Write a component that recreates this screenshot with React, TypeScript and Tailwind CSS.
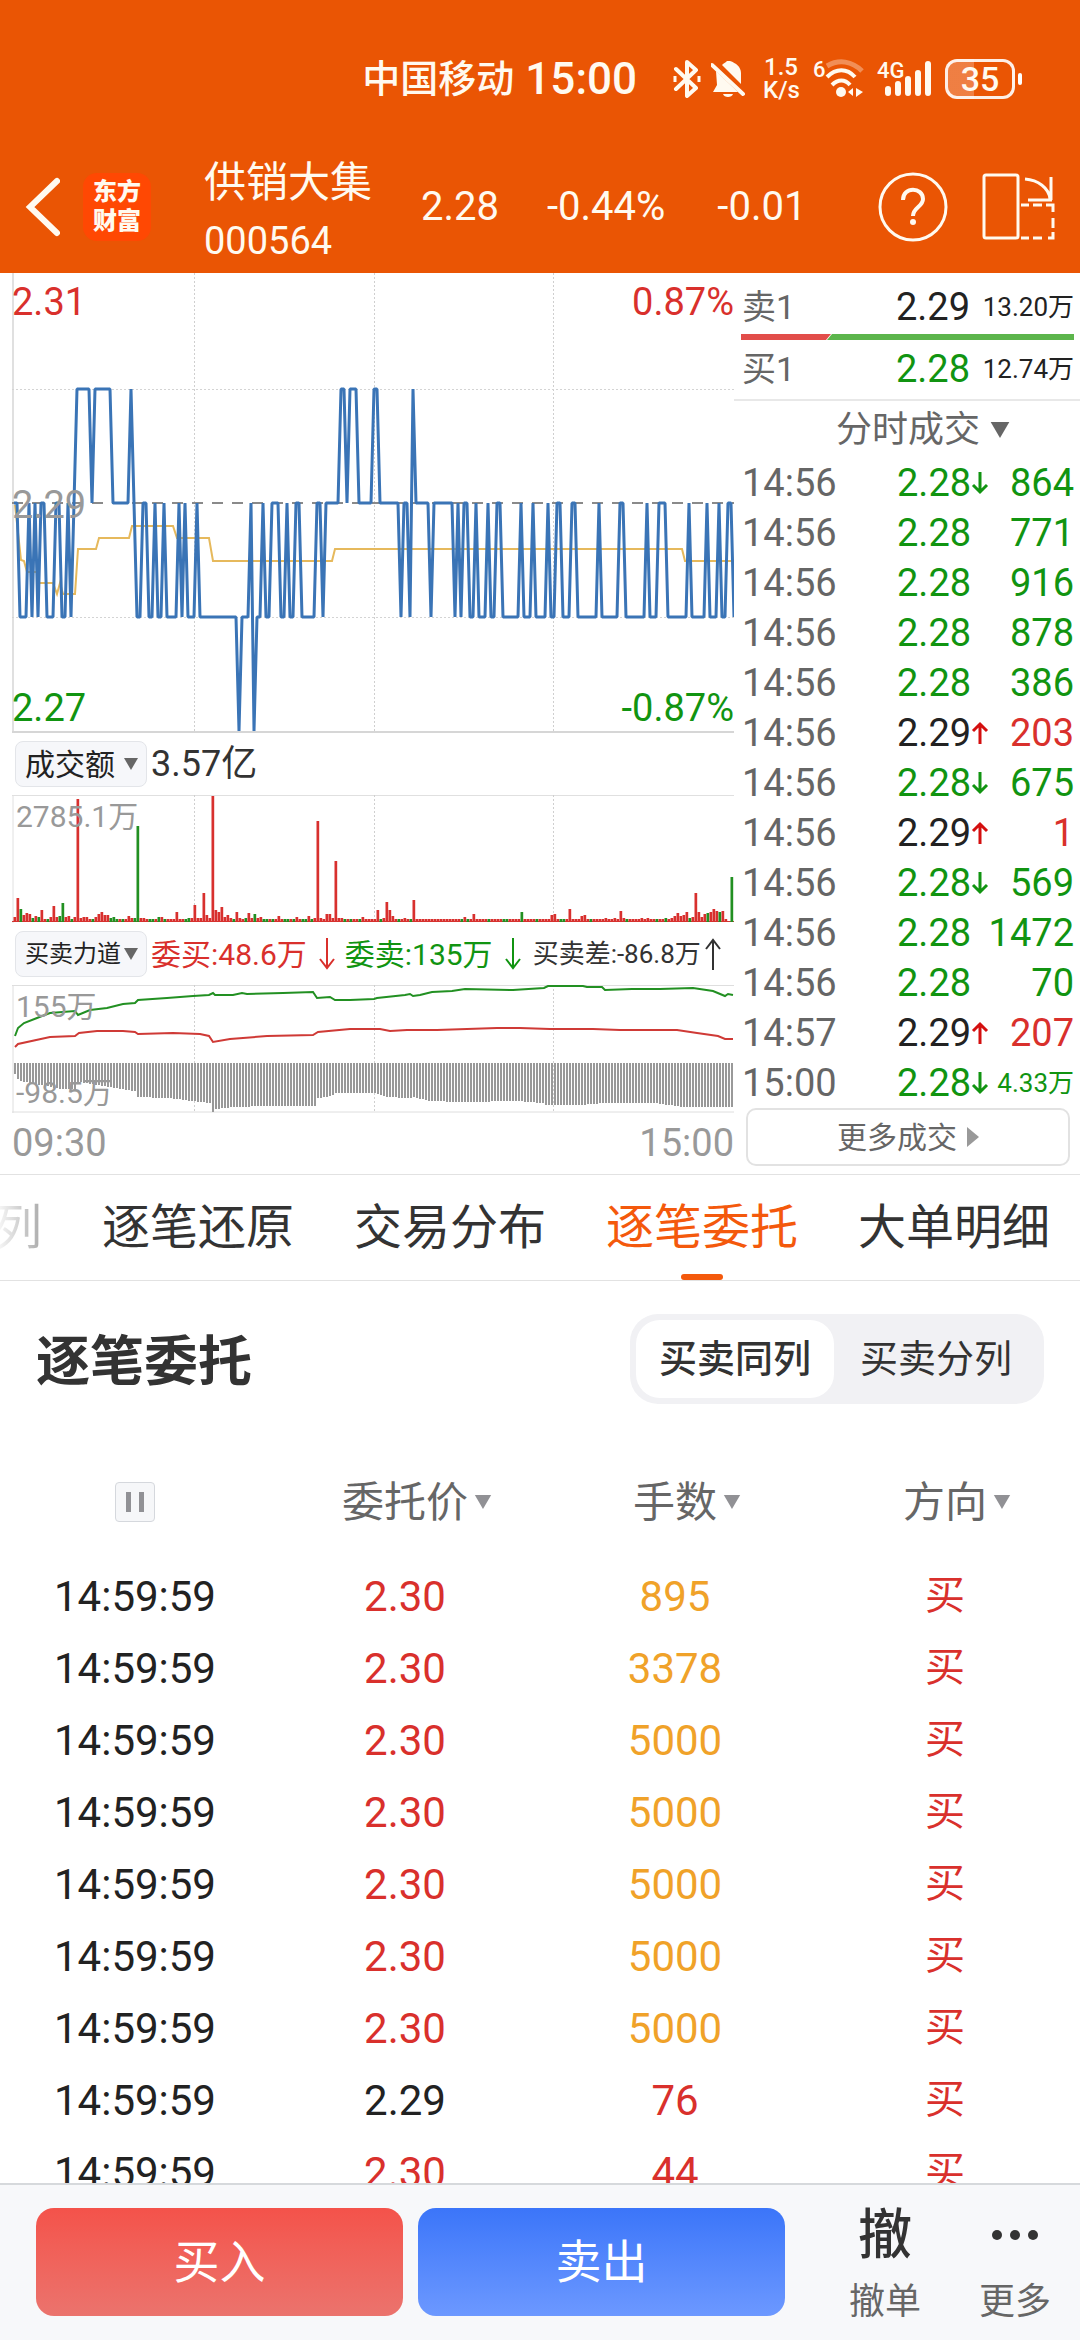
/**
 * Intraday quote screen: status bar, stock header, minute charts with the
 * trade tape beside them, order-by-order list and the trading bar.
 */
import { useState } from "react";
import type { ReactNode } from "react";

/* ---------- data ---------- */

// Price per minute as level + run length: A 2.30, B 2.29, C 2.28, D 2.27
const PRICE_RUNS =
  "B2 C3 B1 C1 B1 C1 B2 C3 B2 C2 B1 C1 B1 A5 B1 A6 B6 A1 B1 C2 B2 C2 B1 C2 B1 C4 B1 C1 B1 C3 B1 C13 D1 C3 B1 D1 " +
  "C2 B1 C2 B3 C2 B1 C2 B2 C5 B2 C1 B5 A2 B1 A3 B5 A2 B7 C1 B2 C1 A1 B5 C1 B7 C1 B1 C1 B2 C2 B1 C3 B1 C2 B2 C6 " +
  "B1 C3 B1 C4 B1 C2 B2 C3 B2 C7 B1 C6 B2 C7 B1 C3 B3 C7 B1 C5 B1 C3 B1 C2 B2 C1";

const LEVEL_Y: Record<string, number> = { A: 116, B: 230, C: 344, D: 458 };

const AVG_POINTS =
  "3,232 9,287 12,288 15,299 25,299 27,310 41,310 45,321 48,310 51,321 63,321 66,276 84,276 87,265 117,265 120,253 " +
  "161,253 165,265 197,265 201,288 320,288 323,276 670,276 673,288 721,288";

// minute -> bar height; every other minute has the base height
const VOLUME: Record<number, number> = {
  0: 5, 1: 24, 2: 13, 3: 7, 4: 9, 5: 8, 6: 4, 7: 6, 8: 5, 9: 12, 12: 5, 13: 16, 14: 5, 15: 6, 16: 19, 17: 5, 18: 6,
  20: 5, 21: 123, 22: 4, 23: 5, 24: 5, 27: 5, 28: 8, 29: 10, 30: 7, 31: 7, 32: 4, 33: 5, 38: 6, 39: 4, 40: 4, 41: 96,
  42: 4, 43: 4, 48: 5, 49: 5, 54: 10, 58: 4, 59: 4, 60: 17, 61: 4, 62: 4, 63: 29, 64: 7, 65: 4, 66: 126, 67: 12,
  68: 10, 69: 15, 70: 5, 71: 7, 72: 4, 74: 10, 75: 4, 77: 4, 78: 9, 79: 4, 80: 8, 81: 4, 82: 5, 88: 6, 94: 5, 98: 6,
  100: 4, 101: 101, 102: 4, 104: 8, 105: 8, 106: 4, 107: 61, 108: 4, 109: 4, 116: 5, 121: 12, 123: 4, 124: 20,
  125: 12, 126: 6, 130: 4, 133: 22, 150: 5, 153: 8, 169: 10, 179: 7, 180: 8, 185: 13, 189: 6, 190: 7, 197: 4, 200: 4,
  202: 11, 203: 4, 209: 4, 211: 4, 217: 4, 219: 4, 220: 6, 221: 9, 222: 6, 223: 7, 224: 10, 225: 4, 226: 5, 227: 29,
  228: 10, 229: 5, 230: 8, 231: 9, 232: 10, 233: 13, 234: 11, 235: 10, 236: 11, 238: 0, 239: 45,
};

const VOLUME_DOWN = new Set([
  2, 6, 8, 11, 15, 16, 19, 26, 32, 33, 34, 36, 40, 41, 45, 46, 48, 50, 57, 58, 73, 77, 80, 83, 84, 86, 90, 91, 93, 96,
  97, 99, 110, 112, 115, 122, 128, 132, 149, 151, 158, 163, 164, 169, 174, 182, 183, 192, 204, 214, 217, 225, 231, 235,
  239,
]);

const SELL_POINTS =
  "3,51 6,43 12,38 25,33 38,28 63,26 66,30 78,25 95,23 111,19 123,18 126,15 155,13 181,11 197,10 201,8 203,10 221,10 " +
  "230,8 235,9 271,8 301,7 305,13 318,12 323,15 338,15 362,14 365,13 393,10 398,9 401,11 408,10 420,7 440,6 453,4 " +
  "501,5 532,3 536,1 571,1 575,2 590,2 593,5 620,4 648,4 681,3 701,6 713,11 716,9 721,10";

const BUY_POINTS =
  "3,62 6,59 38,52 63,51 67,48 85,46 111,46 123,47 126,49 161,48 188,49 197,51 201,57 218,54 255,51 301,50 306,47 " +
  "338,44 368,44 378,46 395,45 425,45 485,43 508,43 538,44 581,44 608,45 665,45 685,48 706,51 713,54 721,54";

// [minute, bar length], linear in between
const DIFF_KEYS = [
  [0, 11], [1, 16], [2, 18], [5, 20], [12, 24], [16, 26], [20, 26], [21, 19], [28, 22], [34, 25], [40, 28], [41, 34],
  [51, 35], [62, 39], [65, 40], [66, 49], [67, 46], [73, 44], [84, 43], [100, 43], [101, 35], [105, 33], [107, 30],
  [120, 30], [124, 34], [131, 35], [133, 34], [138, 38], [149, 39], [168, 38], [176, 40], [177, 42], [189, 42],
  [196, 40], [213, 40], [223, 44], [240, 44],
];

type Trade = { time: string; price: string; move?: "up" | "down"; volume: string; buy?: boolean };

const TRADES: Trade[] = [
  { time: "14:56", price: "2.28", move: "down", volume: "864" },
  { time: "14:56", price: "2.28", volume: "771" },
  { time: "14:56", price: "2.28", volume: "916" },
  { time: "14:56", price: "2.28", volume: "878" },
  { time: "14:56", price: "2.28", volume: "386" },
  { time: "14:56", price: "2.29", move: "up", volume: "203", buy: true },
  { time: "14:56", price: "2.28", move: "down", volume: "675" },
  { time: "14:56", price: "2.29", move: "up", volume: "1", buy: true },
  { time: "14:56", price: "2.28", move: "down", volume: "569" },
  { time: "14:56", price: "2.28", volume: "1472" },
  { time: "14:56", price: "2.28", volume: "70" },
  { time: "14:57", price: "2.29", move: "up", volume: "207", buy: true },
  { time: "15:00", price: "2.28", move: "down", volume: "4.33万" },
];

const ORDERS = [
  { price: "2.30", lots: 895 },
  { price: "2.30", lots: 3378 },
  { price: "2.30", lots: 5000 },
  { price: "2.30", lots: 5000 },
  { price: "2.30", lots: 5000 },
  { price: "2.30", lots: 5000 },
  { price: "2.30", lots: 5000 },
  { price: "2.29", lots: 76 },
  { price: "2.30", lots: 44 },
];

const TABS = ["逐笔还原", "交易分布", "逐笔委托", "大单明细"];

function pricePoints() {
  const points: string[] = [];
  let minute = 0;
  for (const run of PRICE_RUNS.split(" ")) {
    for (let n = Number(run.slice(1)); n > 0; n--) {
      points.push(`${2 + 3 * minute},${LEVEL_Y[run[0]]}`);
      minute++;
    }
  }
  return points.join(" ");
}

function diffLength(minute: number) {
  const next = DIFF_KEYS.findIndex(([m]) => m >= minute);
  const [m1, l1] = DIFF_KEYS[next];
  if (m1 === minute) return l1;
  const [m0, l0] = DIFF_KEYS[next - 1];
  return Math.round(l0 + ((l1 - l0) * (minute - m0)) / (m1 - m0));
}

/* ---------- small parts ---------- */

function Caret({ className = "" }: { className?: string }) {
  return (
    <svg viewBox="0 0 14 12" className={`shrink-0 ${className}`} fill="currentColor" aria-hidden="true">
      <path d="M0 0h14L7 12z" />
    </svg>
  );
}

function Arrow({ up = false, className = "" }: { up?: boolean; className?: string }) {
  return (
    <svg viewBox="0 0 18 24" className={`shrink-0 ${className}`} fill="none" stroke="currentColor" strokeWidth="3" aria-hidden="true">
      <path d={up ? "M9 23V3M2 10l7-7 7 7" : "M9 1v20M2 14l7 7 7-7"} />
    </svg>
  );
}

function ThinArrow({ up = false }: { up?: boolean }) {
  return (
    <svg viewBox="0 0 16 32" className="h-8 w-4 shrink-0" fill="none" stroke="currentColor" strokeWidth="2" aria-hidden="true">
      <path d={up ? "M8 32V2M1 11l7-9 7 9" : "M8 0v30M1 21l7 9 7-9"} />
    </svg>
  );
}

function ChipSelect({ label, options, small }: { label: string; options: string[]; small?: boolean }) {
  return (
    <label className="flex h-[46px] w-[132px] shrink-0 items-center justify-between rounded-lg border border-[#e3e5e9] bg-[#f6f7fa] pr-2 pl-[9px] text-[#222]">
      <select
        aria-label={label}
        className={`appearance-none bg-transparent outline-none ${small ? "w-[98px] text-[24px]" : "w-[92px] text-[30px]"}`}
      >
        {options.map((o) => (
          <option key={o}>{o}</option>
        ))}
      </select>
      <Caret className="h-3 w-3.5 text-[#666]" />
    </label>
  );
}

function GridColumns({ height }: { height: number }) {
  return (
    <g stroke="#cfcfcf" strokeDasharray="2 2">
      {[182, 362, 541].map((x) => (
        <line key={x} x1={x + 0.5} x2={x + 0.5} y1="0" y2={height} />
      ))}
    </g>
  );
}

/* ---------- header ---------- */

function StatusBar() {
  return (
    <div className="flex h-[140px] items-center justify-end pt-[18px] pr-[58px]">
      <span className="text-[38px] font-medium">中国移动</span>
      <span className="ml-[11px] text-[44px] font-medium">15:00</span>
      <svg viewBox="0 0 28 38" className="ml-9 h-[38px] w-7" fill="none" stroke="currentColor" strokeWidth="4" strokeLinejoin="round">
        <path d="M3 9l20 19-9 8V2l9 8L3 29" strokeLinecap="round" />
        <path d="M2 16v6M26 16v6" strokeWidth="3" />
      </svg>
      <svg viewBox="0 0 34 38" className="ml-[10px] h-[38px] w-[34px]" fill="currentColor">
        <path d="M5 11L27 32H2l4-7zM11 5c2-2 3-2 5-4h3c6 2 11 6 11 12v11zM12 34h10c-1 4-9 4-10 0z" />
        <path d="M1 5l31 29" stroke="currentColor" strokeWidth="4" strokeLinecap="round" />
      </svg>
      <span className="ml-[18px] flex w-9 flex-col text-center text-[24px] leading-[23px] font-medium">
        <span>1.5</span>
        <span>K/s</span>
      </span>
      <svg viewBox="0 0 52 40" className="ml-[14px] h-10 w-[52px] overflow-visible" fill="none" stroke="currentColor" strokeWidth="5">
        <text x="0" y="18" fontSize="22" fontWeight="500" fill="currentColor" stroke="none">
          6
        </text>
        <path d="M14 7c12-7 25-5 35 5" opacity=".35" />
        <path d="M14 18c9-9 20-9 28 0M19 26c6-6 13-6 18 0" strokeWidth="4" />
        <circle cx="28" cy="33" r="5" fill="currentColor" stroke="none" />
        <path d="M40 29v8l-5-4zM43 29v9l7-5z" fill="currentColor" stroke="none" />
      </svg>
      <svg viewBox="0 0 54 40" className="ml-3 h-10 w-[54px] overflow-visible" stroke="currentColor" strokeWidth="6" strokeLinecap="round">
        <text x="0" y="19" fontSize="22" fontWeight="500" fill="currentColor" stroke="none">
          4G
        </text>
        <path d="M11 30v4M21 25v9M31 20v14M41 14v20M51 5v29" />
      </svg>
      <span className="ml-[14px] flex items-center gap-[3px]">
        <span className="flex h-10 w-[70px] items-center justify-center rounded-xl border-3 border-white/90 bg-linear-to-r from-white/25 from-40% to-transparent to-40% text-[34px] font-medium">
          35
        </span>
        <span className="h-3 w-1 rounded-full bg-white" />
      </span>
    </div>
  );
}

function StockHeader() {
  return (
    <div className="flex h-[133px] items-center pr-6 pl-6">
      <button aria-label="返回">
        <svg viewBox="0 0 36 60" className="h-[60px] w-9" fill="none" stroke="currentColor" strokeWidth="6">
          <path d="M33 4L6 30l27 26" strokeLinecap="round" />
        </svg>
      </button>
      <span className="ml-[23px] flex h-[68px] w-[68px] flex-col items-center justify-center rounded-[14px] bg-[#ff4803] text-[24px] leading-[29px] font-black">
        <span>东方</span>
        <span>财富</span>
      </span>
      <div className="ml-[53px] flex w-[170px] flex-col pt-[10px]">
        <h1 className="text-[42px] leading-[58px]">供销大集</h1>
        <span className="text-[38px] leading-[58px]">000564</span>
      </div>
      <div className="ml-[47px] flex gap-12 text-[40px]">
        <span>2.28</span>
        <span>-0.44%</span>
        <span className="ml-1">-0.01</span>
      </div>
      <button aria-label="帮助" className="ml-auto">
        <svg viewBox="0 0 70 70" className="h-[70px] w-[70px]" fill="none" stroke="currentColor" strokeWidth="3">
          <circle cx="35" cy="35" r="33" />
          <path d="M25 28c0-14 20-13 20-1 0 8-10 8-10 17" strokeWidth="4" />
          <circle cx="35" cy="50" r="3" fill="currentColor" stroke="none" />
        </svg>
      </button>
      <button aria-label="横屏" className="ml-[34px]">
        <svg viewBox="0 0 74 70" className="h-[70px] w-[74px]" fill="none" stroke="currentColor" strokeWidth="3">
          <rect x="2" y="3" width="34" height="63" rx="2" />
          <path d="M43 7c13 1 24 9 25 20M69 5v23M46 28h24" />
          <path d="M39 33h8M51 33h9M64 33h7v7M71 46v10M71 60v6h-5M60 66h-9M47 66h-8" />
        </svg>
      </button>
    </div>
  );
}

/* ---------- charts ---------- */

function PriceChart() {
  return (
    <div className="relative text-[38px] leading-[44px]">
      <svg viewBox="0 0 722 460" preserveAspectRatio="none" className="block h-[460px] w-full" fill="none">
        <path d="M1 0v460" stroke="#e0e0e0" strokeWidth="2" />
        <GridColumns height={458} />
        <path d="M0 116.5h722M0 344.5h722" stroke="#d4d4d4" strokeDasharray="2 2" />
        <path d="M0 230h722" stroke="#8a8a8a" strokeWidth="2" strokeDasharray="11 9" />
        <path d="M0 459h722" stroke="#d6d6d6" strokeWidth="2" />
        <polyline points={AVG_POINTS} stroke="#e6b95c" strokeWidth="2" />
        <polyline points={pricePoints()} stroke="#3a74b6" strokeWidth="3" strokeLinejoin="bevel" />
      </svg>
      <span className="absolute top-[7px] left-0 text-[#d9302c]">2.31</span>
      <span className="absolute top-[7px] right-0 text-[#d9302c]">0.87%</span>
      <span className="absolute top-[210px] left-0 text-[#999]">2.29</span>
      <span className="absolute bottom-[3px] left-0 text-[#119411]">2.27</span>
      <span className="absolute right-0 bottom-[3px] text-[#119411]">-0.87%</span>
    </div>
  );
}

function VolumeChart() {
  return (
    <div className="relative text-[30px] leading-[36px] text-[#999]">
      <svg viewBox="0 0 722 128" preserveAspectRatio="none" className="block h-[128px] w-full" fill="none">
        <path d="M0 .5h722M1 0v128" stroke="#e0e0e0" />
        <GridColumns height={126} />
        <path d="M0 126.5h722" stroke="#c93a35" />
        {Array.from({ length: 240 }).map((_, i) => {
          const h = VOLUME[i] ?? 3;
          return <rect key={i} x={3 * i + 1.5} y={127 - h} width="2.7" height={h} fill={VOLUME_DOWN.has(i) ? "#229022" : "#d8302e"} />;
        })}
      </svg>
      <span className="absolute top-1 left-1">2785.1万</span>
    </div>
  );
}

function ForceChart() {
  return (
    <div className="relative text-[30px] leading-[36px] text-[#999]">
      <svg viewBox="0 0 722 128" preserveAspectRatio="none" className="block h-[128px] w-full" fill="none">
        <path d="M0 .5h722M1 0v128M0 127h722" stroke="#dedede" />
        <GridColumns height={127} />
        {Array.from({ length: 241 }).map((_, i) => (
          <rect key={i} x={3 * i + 2} y="78" width="2" height={diffLength(i)} fill="#999" />
        ))}
        <polyline points={SELL_POINTS} stroke="#229022" strokeWidth="2" />
        <polyline points={BUY_POINTS} stroke="#cf3a36" strokeWidth="2" />
      </svg>
      <span className="absolute top-1 left-1">155万</span>
      <span className="absolute bottom-[2px] left-1">-98.5万</span>
    </div>
  );
}

function Charts() {
  return (
    <section className="min-w-0 flex-1 pl-3">
      <PriceChart />
      <div className="flex h-[62px] items-center gap-1 pl-[3px] text-[36px] text-[#333]">
        <ChipSelect label="成交指标" options={["成交额", "成交量"]} />
        <span>3.57亿</span>
      </div>
      <VolumeChart />
      <div className="flex h-[62px] items-center pl-[3px] text-[30px] whitespace-nowrap">
        <ChipSelect label="副图指标" options={["买卖力道", "资金流向"]} small />
        <span className="ml-1 flex items-center gap-3 text-[#d9302c]">
          委买:48.6万
          <ThinArrow />
        </span>
        <span className="ml-[10px] flex items-center gap-3 text-[#119411]">
          委卖:135万
          <ThinArrow />
        </span>
        <span className="ml-3 flex items-center gap-1 text-[26px] text-[#333]">
          买卖差:-86.8万
          <ThinArrow up />
        </span>
      </div>
      <ForceChart />
      <div className="flex h-[61px] items-center justify-between text-[38px] text-[#999]">
        <span>09:30</span>
        <span>15:00</span>
      </div>
    </section>
  );
}

/* ---------- trade tape ---------- */

function BestQuote({ label, price, amount, priceClass }: { label: string; price: string; amount: string; priceClass: string }) {
  return (
    <div className="flex items-center text-[38px]">
      <span className="flex-1 text-[34px] text-[#666]">{label}</span>
      <span className={priceClass}>{price}</span>
      <span className="w-[104px] text-right text-[26px] text-[#222]">{amount}</span>
    </div>
  );
}

function TradeTape() {
  return (
    <section className="w-[346px] shrink-0 pb-2">
      <div className="flex h-[61px] flex-col justify-center pt-2 pr-1.5 pl-2">
        <BestQuote label="卖1" price="2.29" amount="13.20万" priceClass="text-[#222]" />
      </div>
      <div className="flex h-1.5 pr-1.5 pl-[7px]">
        <svg viewBox="0 0 333 6" preserveAspectRatio="none" className="h-1.5 w-full">
          <path d="M0 0h90l-5 6H0z" fill="#e24d4a" />
          <path d="M91 0h242v6H86z" fill="#5cb54c" />
        </svg>
      </div>
      <div className="flex h-[59px] flex-col justify-center pr-1.5 pl-2">
        <BestQuote label="买1" price="2.28" amount="12.74万" priceClass="text-[#119411]" />
      </div>
      <label className="flex h-[59px] items-center justify-center gap-2 border-t-2 border-[#e8e8e8] pl-8 text-[#666]">
        <select aria-label="成交类型" className="w-[146px] appearance-none bg-transparent text-[36px] outline-none">
          <option>分时成交</option>
          <option>逐笔成交</option>
        </select>
        <Caret className="h-4 w-5" />
      </label>
      <div className="pr-1.5 pl-2">
        <table className="w-full table-fixed text-[38px] leading-[50px]">
          <tbody>
            {TRADES.map((t, i) => (
              <tr key={i} className="h-[50px]">
                <td className="p-0 text-[#666]">{t.time}</td>
                <td className="w-[91px] p-0">
                  <span className="flex items-center">
                    <span className={t.price === "2.29" ? "text-[#222]" : "text-[#119411]"}>{t.price}</span>
                    {t.move && (
                      <Arrow up={t.move === "up"} className={`h-6 w-[18px] ${t.move === "up" ? "text-[#d40f0f]" : "text-[#119411]"}`} />
                    )}
                  </span>
                </td>
                <td
                  className={`w-[86px] p-0 text-right ${t.buy ? "text-[#d9302c]" : "text-[#119411]"} ${
                    t.volume.endsWith("万") ? "text-[26px]" : ""
                  }`}
                >
                  {t.volume}
                </td>
              </tr>
            ))}
          </tbody>
        </table>
      </div>
      <div className="pr-[10px] pl-3">
        <button className="flex h-[58px] w-full items-center justify-center gap-[10px] rounded-[10px] border-2 border-[#e2e2e2] text-[30px] text-[#666]">
          更多成交
          <svg viewBox="0 0 12 20" className="h-5 w-3" fill="#999">
            <path d="M0 0l12 10L0 20z" />
          </svg>
        </button>
      </div>
    </section>
  );
}

/* ---------- order list ---------- */

function DetailTabs() {
  const [active, setActive] = useState("逐笔委托");
  return (
    <nav className="flex h-[107px] shrink-0 gap-[60px] overflow-hidden border-y border-[#e2e2e2] text-[48px] whitespace-nowrap text-[#333]">
      <button className="-ml-1.5 shrink-0 bg-linear-to-r from-white to-[#aaa] bg-clip-text text-transparent">列</button>
      {TABS.map((tab) => (
        <button
          key={tab}
          onClick={() => setActive(tab)}
          className={`relative shrink-0 ${tab === active ? "text-[#f4590c]" : ""}`}
        >
          {tab}
          {tab === active && <span className="absolute inset-x-0 bottom-0 mx-auto h-1.5 w-[42px] rounded-sm bg-[#f4590c]" />}
        </button>
      ))}
    </nav>
  );
}

function SortHeader({ children }: { children: ReactNode }) {
  return (
    <th className="p-0 font-normal">
      <button className="inline-flex items-center">
        {children}
        {/* zero-width box keeps the label centred over its column */}
        <span className="flex w-0">
          <Caret className="ml-1.5 h-3.5 w-[18px] text-[#919195]" />
        </span>
      </button>
    </th>
  );
}

function OrderList() {
  const [split, setSplit] = useState(false);
  const on = "bg-white font-medium";
  return (
    <section className="min-h-0 flex-1 overflow-hidden">
      <div className="flex items-center justify-between px-9 pt-[33px]">
        <h2 className="pt-2 text-[54px] leading-[82px] font-bold text-[#333]">逐笔委托</h2>
        <div className="flex h-[90px] rounded-[28px] bg-[#f1f1f4] p-1.5 text-[38px] text-[#333]">
          <button aria-pressed={!split} onClick={() => setSplit(false)} className={`w-[198px] rounded-3xl ${split ? "" : on}`}>
            买卖同列
          </button>
          <button aria-pressed={split} onClick={() => setSplit(true)} className={`w-[204px] rounded-3xl ${split ? on : ""}`}>
            买卖分列
          </button>
        </div>
      </div>
      <table className="mt-10 w-full table-fixed text-center text-[42px] text-[#222]">
        <thead className="text-[#666]">
          <tr className="h-[116px]">
            <th className="p-0">
              <button aria-label="暂停" className="mx-auto flex h-10 w-10 items-center justify-center gap-2 rounded-sm border border-[#d5d8dd] bg-[#f6f7f9]">
                <span className="h-5 w-[5px] bg-[#919195]" />
                <span className="h-5 w-[5px] bg-[#919195]" />
              </button>
            </th>
            <SortHeader>委托价</SortHeader>
            <SortHeader>手数</SortHeader>
            <SortHeader>方向</SortHeader>
          </tr>
        </thead>
        <tbody>
          {ORDERS.map((o, i) => (
            <tr key={i} className="h-[72px]">
              <td className="p-0">14:59:59</td>
              <td className={`p-0 ${o.price === "2.30" ? "text-[#d9302c]" : ""}`}>{o.price}</td>
              <td className={`p-0 ${o.lots >= 500 ? "text-[#f0a229]" : "text-[#d9302c]"}`}>{o.lots}</td>
              <td className="p-0 text-[40px] text-[#d9302c]">买</td>
            </tr>
          ))}
        </tbody>
      </table>
    </section>
  );
}

function TradeBar() {
  return (
    <footer className="flex h-[157px] shrink-0 border-t-2 border-[#d6d9dc] bg-[#f7f8fa] pt-[23px] pb-6 pl-9">
      <div className="flex flex-1 gap-[15px] text-[46px] text-white">
        <button className="flex-1 rounded-[18px] bg-linear-to-b from-[#f4524a] to-[#eb736d]">买入</button>
        <button className="flex-1 rounded-[18px] bg-linear-to-b from-[#3b75f9] to-[#6c98ff]">卖出</button>
      </div>
      <div className="ml-[35px] flex pt-0.5 text-[36px] leading-7 text-[#666]">
        <button className="flex w-[130px] flex-col items-center justify-between">
          <span className="text-[54px] leading-[52px] font-medium text-[#333]">撤</span>
          撤单
        </button>
        <button className="flex w-[130px] flex-col items-center justify-between">
          <svg viewBox="0 0 48 52" className="h-[52px] w-12" fill="#333">
            <circle cx="6" cy="25" r="5" />
            <circle cx="24" cy="25" r="5" />
            <circle cx="42" cy="25" r="5" />
          </svg>
          更多
        </button>
      </div>
    </footer>
  );
}

export default function App() {
  return (
    <div className="flex h-screen flex-col overflow-hidden bg-white font-['Roboto','Noto_Sans_CJK_SC',sans-serif]">
      <header className="shrink-0 bg-[#ea5504] text-[#fffaf0]">
        <StatusBar />
        <StockHeader />
      </header>
      <div className="flex shrink-0">
        <Charts />
        <TradeTape />
      </div>
      <DetailTabs />
      <OrderList />
      <TradeBar />
    </div>
  );
}
